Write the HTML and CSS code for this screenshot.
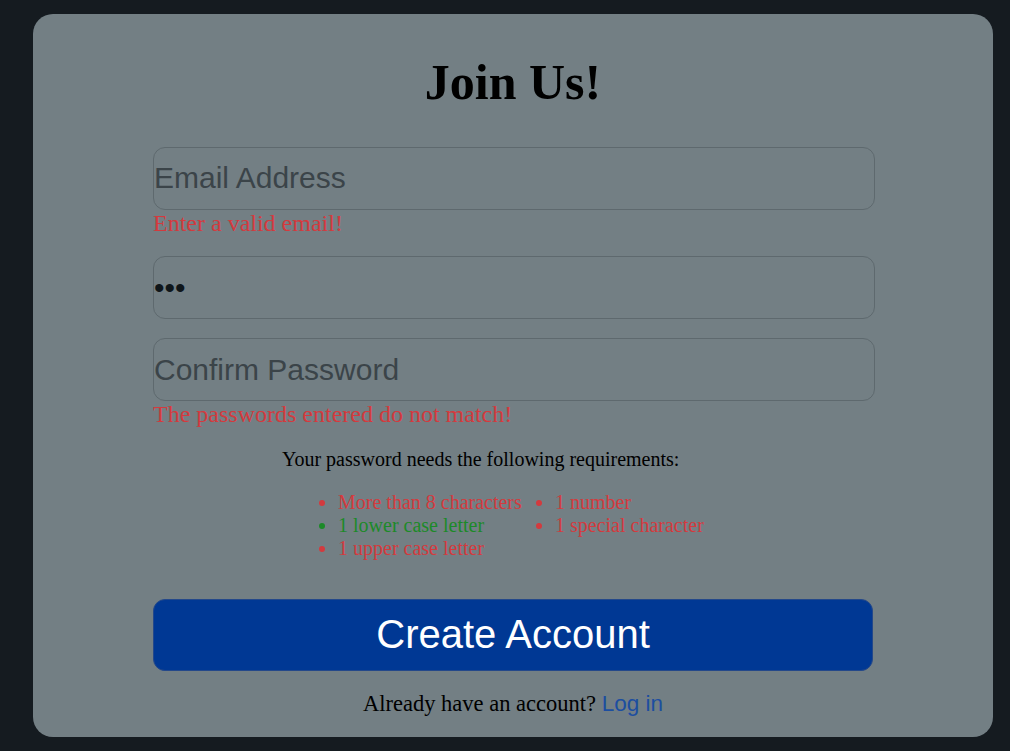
FILE: index.html
```html
<!DOCTYPE html>
<html lang="en">
<head>
<meta charset="utf-8">
<title>Join Us!</title>
<link rel="stylesheet" href="styles.css">
</head>
<body>
<main class="card">
  <h1 class="title">Join Us!</h1>
  <form class="form">
    <div class="field">
      <input class="input" type="email" placeholder="Email Address">
      <div class="error">Enter a valid email!</div>
    </div>
    <div class="field">
      <input class="input" type="password" value="abc">
    </div>
    <div class="field">
      <input class="input" type="password" placeholder="Confirm Password">
      <div class="error">The passwords entered do not match!</div>
    </div>
    <div class="req">
      <p class="req-title">Your password needs the following requirements:</p>
      <ul class="req-list">
        <li class="bad">More than 8 characters</li>
        <li class="good">1 lower case letter</li>
        <li class="bad">1 upper case letter</li>
        <li class="bad">1 number</li>
        <li class="bad">1 special character</li>
      </ul>
    </div>
    <button class="submit" type="button">Create Account</button>
  </form>
  <p class="login">Already have an account? <a class="login-link" href="#">Log in</a></p>
</main>
</body>
</html>
```

FILE: styles.css
```css
html, body {
  margin: 0;
  padding: 0;
  background: #151b20;
}

body {
  padding: 14px 17px 14px 33px;
  font-family: "Liberation Serif", "Times New Roman", serif;
}

.card {
  width: 960px;
  height: 723px;
  box-sizing: border-box;
  background: #737f84;
  border-radius: 20px;
  padding-top: 40px;
  display: flex;
  flex-direction: column;
}

.title {
  margin: 0 0 35px;
  font-size: 50px;
  font-weight: bold;
  line-height: 57.5px;
  text-align: center;
  color: #000;
}

.form {
  margin-left: 120px;
  width: 722px;
  display: flex;
  flex-direction: column;
  gap: 19px;
}

.field {
  display: flex;
  flex-direction: column;
}

.input {
  box-sizing: border-box;
  width: 722px;
  height: 63px;
  margin: 0;
  padding: 0;
  border: 1px solid #5e696e;
  border-radius: 12px;
  background: transparent;
  font-family: "Liberation Sans", Arial, sans-serif;
  font-size: 30px;
  color: #0f161a;
  outline: none;
}

.input::placeholder {
  color: #3b4449;
  opacity: 1;
}

.error {
  font-size: 24px;
  line-height: 27.6px;
  color: #d33a3e;
}

.req {
  margin-left: 129px;
  width: 473px;
  font-size: 20px;
  line-height: 23px;
}

.req-title {
  margin: 0 0 20px;
  color: #000;
}

.req-list {
  margin: 0;
  padding-left: 56px;
  display: grid;
  grid-template-columns: 200px 200px;
  grid-template-rows: repeat(3, 23px);
  grid-auto-flow: column;
  column-gap: 17px;
}

.bad {
  color: #d33a3e;
}

.good {
  color: #1c8a28;
}

.submit {
  margin-top: 20px;
  width: 720px;
  height: 72px;
  box-sizing: border-box;
  border: 1px solid #24488a;
  border-radius: 12px;
  background: #003894;
  color: #fff;
  font-family: "Liberation Sans", Arial, sans-serif;
  font-size: 40px;
  padding: 0;
}

.login {
  margin: 20px 0 0;
  text-align: center;
  font-size: 22.5px;
  line-height: 26px;
  color: #000;
}

.login-link {
  font-family: "Liberation Sans", Arial, sans-serif;
  color: #1c4ea0;
  text-decoration: none;
}
```
